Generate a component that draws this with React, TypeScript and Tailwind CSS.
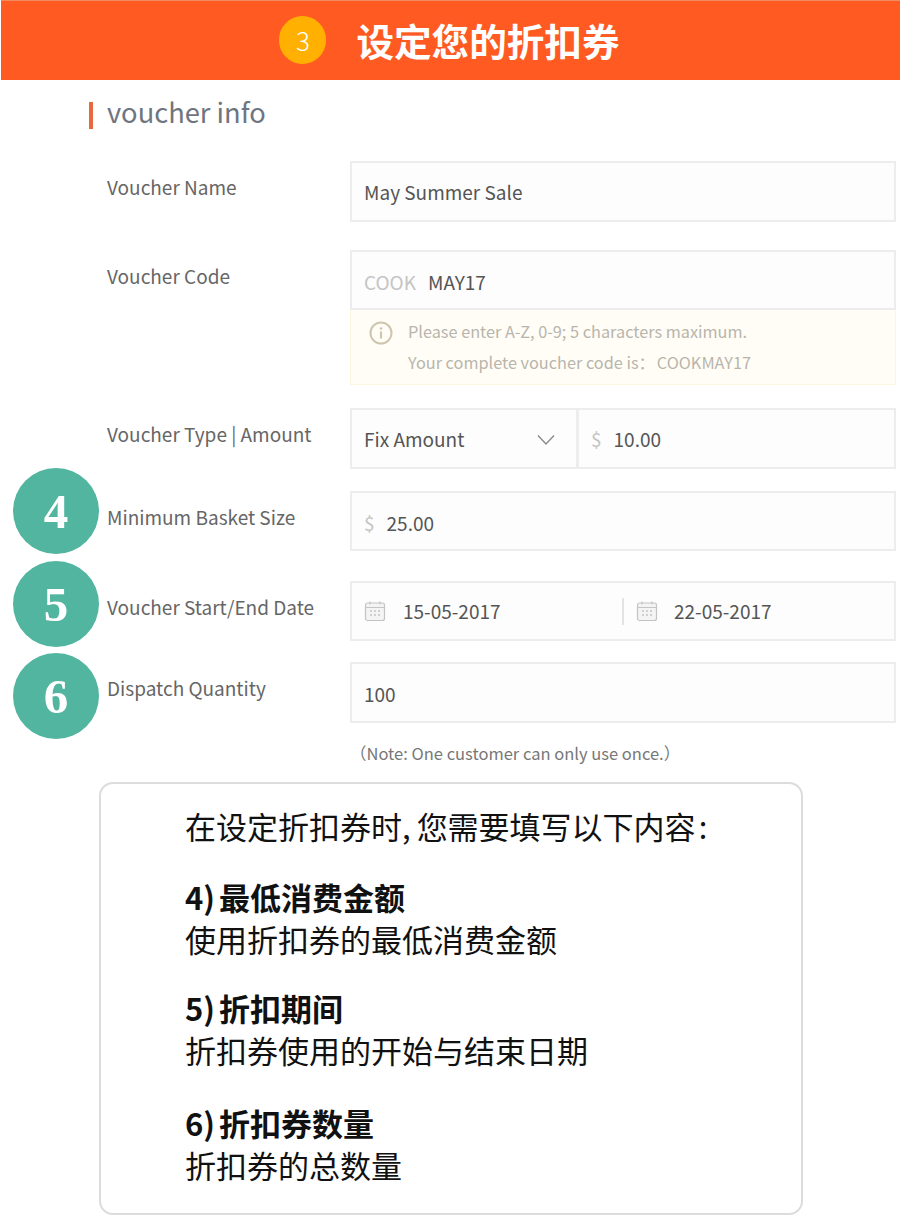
const cjk = "font-['Noto_Sans_CJK_SC','Noto_Sans',sans-serif]";

function CalendarIcon() {
  return (
    <svg width="22" height="22" viewBox="0 0 22 22" fill="none" className="shrink-0 text-[#c4c4c4]">
      <rect x="1.5" y="3" width="19" height="17.5" rx="2" stroke="currentColor" strokeWidth="1.2" fill="#f4f4f4" />
      <path d="M1.5 7.5h19M6 1.5v3M16 1.5v3" stroke="currentColor" strokeWidth="1.2" />
      <path d="M6 11h2M10 11h2M14 11h2M6 15h2M10 15h2M14 15h2" stroke="currentColor" strokeWidth="1.6" />
    </svg>
  );
}

function InfoIcon() {
  return (
    <svg width="24" height="24" viewBox="0 0 24 24" fill="none" className="mt-[1px] shrink-0">
      <circle cx="12" cy="12" r="10.5" stroke="#cfc5ae" strokeWidth="2" />
      <circle cx="12" cy="7.5" r="1.3" fill="#cfc5ae" />
      <path d="M12 10.5v7" stroke="#cfc5ae" strokeWidth="2.2" />
    </svg>
  );
}

function Chevron() {
  return (
    <svg width="20" height="12" viewBox="0 0 20 12" fill="none" className="shrink-0">
      <path d="M2 1.5l8 8.5 8-8.5" stroke="#8a8a8a" strokeWidth="1.4" />
    </svg>
  );
}

function Bubble({ n, className }: { n: number; className: string }) {
  return (
    <div
      className={`absolute left-[13px] flex h-[86px] w-[86px] items-center justify-center rounded-full bg-[#52b5a0] font-['Liberation_Serif',serif] text-[49px] font-bold leading-none text-white ${className}`}
    >
      {n}
    </div>
  );
}

function Field({ children, className = '' }: { children: React.ReactNode; className?: string }) {
  return (
    <div className={`flex h-[60px] items-center border-2 border-[#ededed] bg-[#fdfdfd] pl-[12px] text-[19px] text-[#555] ${className}`}>
      {children}
    </div>
  );
}

function Row({
  label,
  badge,
  className = '',
  children,
}: {
  label: string;
  badge?: React.ReactNode;
  className?: string;
  children: React.ReactNode;
}) {
  return (
    <div className={`relative flex pr-[4px] ${className}`}>
      {badge}
      <div className="w-[350px] shrink-0 pl-[107px] pt-[11px] text-[19px] leading-[30px] text-[#666]">{label}</div>
      <div className="min-w-0 flex-1">{children}</div>
    </div>
  );
}

export default function App() {
  return (
    <div className={`h-[1227px] w-[900px] overflow-hidden bg-white ${cjk}`}>
      <div className="ml-px flex h-[80px] items-center justify-center gap-[30px] border-t border-[#f08a60] bg-[#ff5a22] pb-[2px] pr-[2px]">
        <div className="flex h-[48px] w-[47px] items-center justify-center rounded-full bg-[#ffb000] text-[26px] font-light text-white">
          3
        </div>
        <div className="text-[37.6px] font-bold leading-none text-white">设定您的折扣券</div>
      </div>

      <div className="ml-[89px] mt-[22px] flex h-[27px] items-center gap-[14px]">
        <div className="h-full w-[4px] bg-[#e8693c]" />
        <div className="-mt-[8px] text-[27.3px] leading-none text-[#6f7580]">voucher info</div>
      </div>

      <Row label="Voucher Name" className="mt-[32px]">
        <Field className="h-[61px] pt-[2px]">May Summer Sale</Field>
      </Row>

      <Row label="Voucher Code" className="mt-[28px]">
        <Field className="pt-[4px]">
          <span className="text-[#c4c4c4]">COOK</span>
          <span className="ml-[12px]">MAY17</span>
        </Field>
        <div className="flex h-[75px] gap-[15px] border border-t-0 border-[#fbf5e2] bg-[#fffdf6] pl-[18px] pt-[10px] text-[16.3px] leading-[31px] text-[#b8b5ac]">
          <InfoIcon />
          <div className="-mt-[4px]">
            <div>Please enter A-Z, 0-9; 5 characters maximum.</div>
            <div>
              Your complete voucher code is：<span className="ml-[2px]">COOKMAY17</span>
            </div>
          </div>
        </div>
      </Row>

      <Row label="Voucher Type | Amount" className="mt-[23px]">
        <div className="flex h-[61px]">
          <Field className="h-full w-[229px] shrink-0 justify-between border-r-[3px] pr-[20px] pt-[2px]">
            Fix Amount
            <Chevron />
          </Field>
          <Field className="h-full min-w-0 flex-1 border-l-0 pt-[2px]">
            <span className="text-[#c4c4c4]">$</span>
            <span className="ml-[12px]">10.00</span>
          </Field>
        </div>
      </Row>

      <Row label="Minimum Basket Size" badge={<Bubble n={4} className="top-[-23px]" />} className="mt-[22px]">
        <Field className="pt-[4px]">
          <span className="text-[#c4c4c4]">$</span>
          <span className="ml-[12px]">25.00</span>
        </Field>
      </Row>

      <Row label="Voucher Start/End Date" badge={<Bubble n={5} className="top-[-20px]" />} className="mt-[30px]">
        <Field>
          <CalendarIcon />
          <span className="ml-[17px] w-[203px]">15-05-2017</span>
          <div className="ml-[16px] h-[27px] w-[2px] bg-[#e4e4e4]" />
          <span className="ml-[12px]">
            <CalendarIcon />
          </span>
          <span className="ml-[16px]">22-05-2017</span>
        </Field>
      </Row>

      <Row label="Dispatch Quantity" badge={<Bubble n={6} className="top-[-9px]" />} className="mt-[21px]">
        <Field className="h-[61px] pt-[3px]">100</Field>
      </Row>

      <div className="ml-[350px] mt-[18px] text-[16.5px] leading-[24px] text-[#777]">（Note: One customer can only use once.）</div>

      <div className="ml-[99px] mt-[17px] h-[433px] w-[704px] rounded-[14px] border-2 border-[#dcdcdc] pl-[84px] pt-[21px] text-[31px] leading-[42px] text-[#111]">
        <div>
          在设定折扣券时<span className="mr-[6px]">,</span>您需要填写以下内容<span className="ml-[3px]">:</span>
        </div>
        <div className="mt-[29px] font-bold">
          4)<span className="ml-[4px]">最低消费金额</span>
        </div>
        <div>使用折扣券的最低消费金额</div>
        <div className="mt-[27px] font-bold">
          5)<span className="ml-[4px]">折扣期间</span>
        </div>
        <div>折扣券使用的开始与结束日期</div>
        <div className="mt-[31px] font-bold">
          6)<span className="ml-[4px]">折扣券数量</span>
        </div>
        <div>折扣券的总数量</div>
      </div>
    </div>
  );
}
